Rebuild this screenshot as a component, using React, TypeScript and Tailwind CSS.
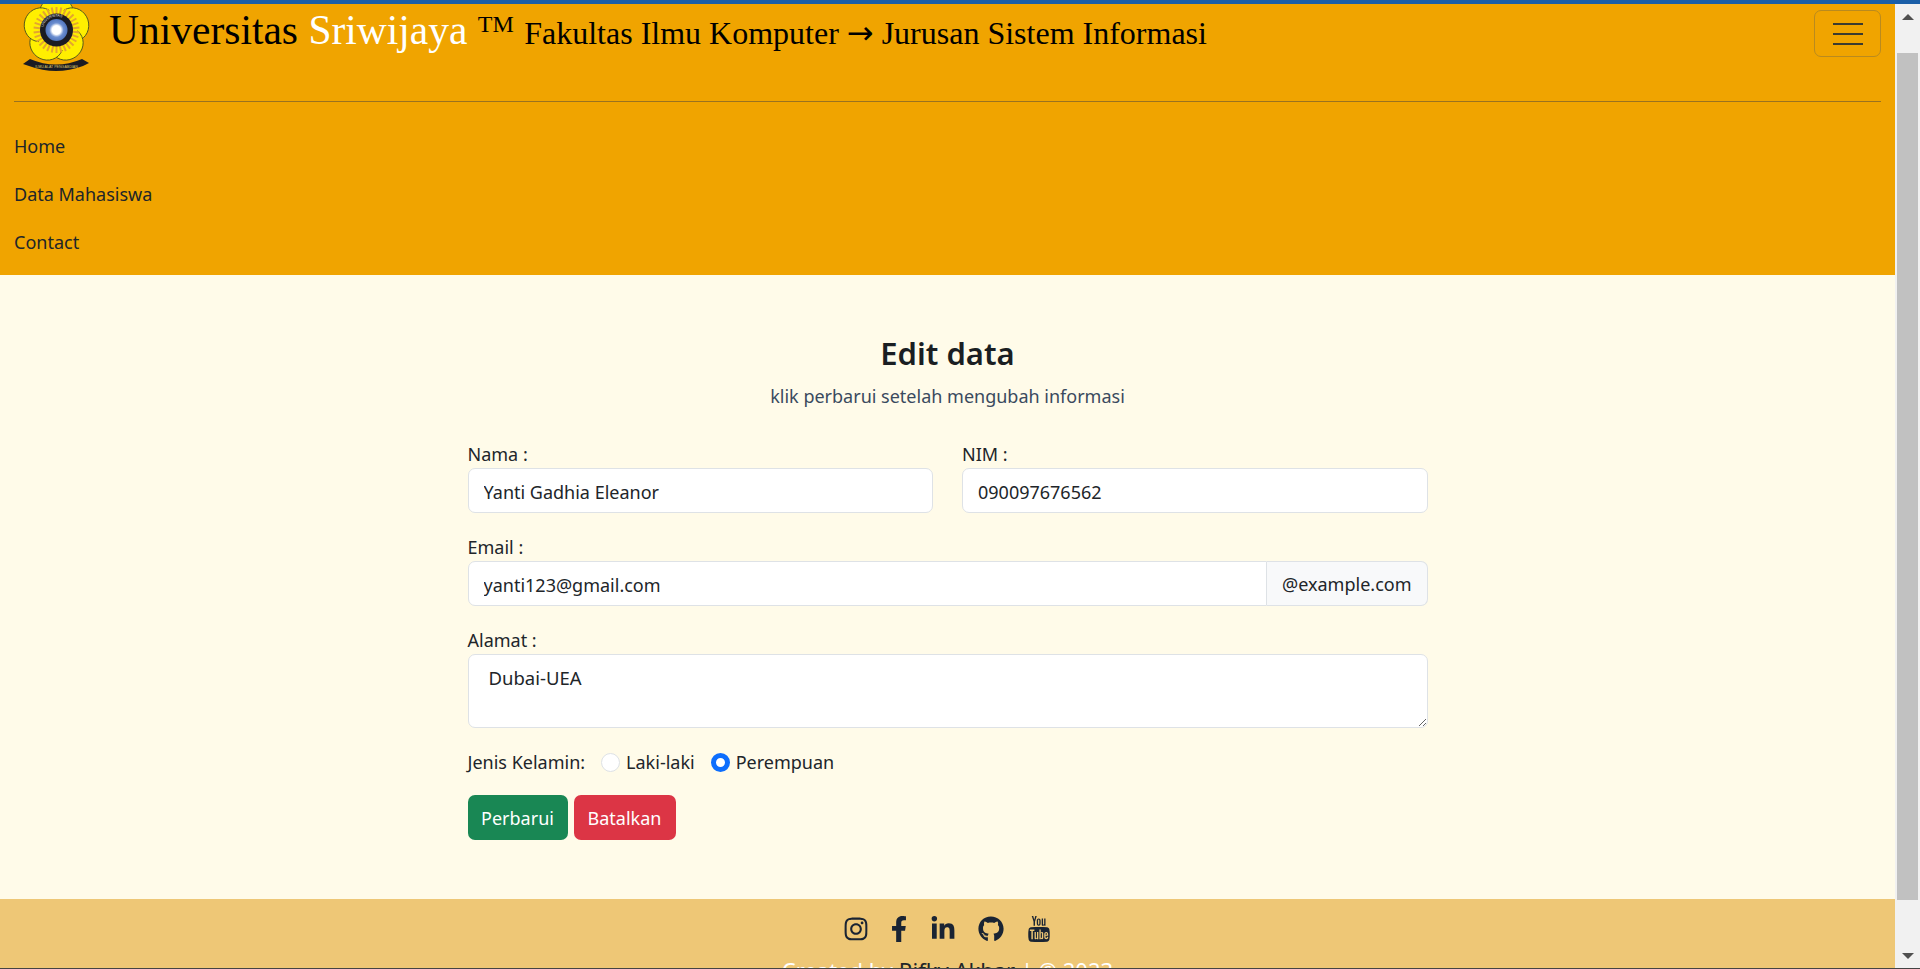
import React from 'react'
import { FaInstagram, FaFacebookF, FaLinkedinIn, FaGithub } from 'react-icons/fa'
import { TfiYoutube } from 'react-icons/tfi'

const petals = [0, 72, 144, 216, 288]
const rays = Array.from({ length: 30 }, (_, i) => i * 12)

const Logo = () => (
  <svg width="72" height="68" viewBox="0 0 72 68" className="block shrink-0">
    <defs>
      <radialGradient id="centre">
        <stop offset="40%" stopColor="#ffffff" />
        <stop offset="65%" stopColor="#6d8fd0" />
        <stop offset="100%" stopColor="#4f74bd" />
      </radialGradient>
      <path id="ring" d="M21 26 a13.5 13.5 0 0 1 27 0" />
    </defs>
    <g fill="#ffef00" stroke="#3f4a20" strokeWidth="0.8">
      {petals.map((a) => (
        <ellipse key={a} cx="34.5" cy="9" rx="17" ry="16" transform={`rotate(${a} 34.5 26)`} />
      ))}
    </g>
    <circle cx="34.5" cy="26" r="21" fill="#ffef00" />
    <g stroke="#e3a530" strokeWidth="2">
      {rays.map((a) => (
        <line key={a} x1="34.5" y1="3" x2="34.5" y2="11" transform={`rotate(${a} 34.5 26)`} />
      ))}
    </g>
    <circle cx="34.5" cy="26" r="16.5" fill="#1b1b22" />
    <circle cx="34.5" cy="26" r="11" fill="url(#centre)" />
    <text fontSize="3.6" fill="#e8e8e8" fontFamily="Liberation Sans, sans-serif">
      <textPath href="#ring" startOffset="3">UNIVERSITAS</textPath>
    </text>
    <path d="M1 60 L8 55 Q34 66 60 55 L67 59 L61 62 Q34 72 7 62 Z" fill="#1b1b22" />
    <text x="34.5" y="63.5" textAnchor="middle" fontSize="3.6" fill="#d9c36a" fontFamily="Liberation Sans, sans-serif">ILMU ALAT PENGABDIAN</text>
  </svg>
)

const inputCls =
  "w-full h-[45px] px-[15px] pt-[2px] bg-white border border-[#dee2e6] rounded-[7px] text-[#212529] text-[18px] outline-none"

const App: React.FC = () => {
  return (
    <div className="h-[969px] w-[1920px] overflow-hidden flex flex-col bg-[#fffbe9] text-[#212529] text-[18px] font-['Noto_Sans','Open_Sans',sans-serif]">
      <div className="h-[4px] bg-[#1b5fa8] shrink-0" />
      <div className="flex h-[964px] shrink-0">
        <div className="w-[1895px] shrink-0 flex flex-col">
          <header className="bg-[#f0a400] h-[271px] shrink-0 px-[14px]">
            <div className="flex h-[98px] border-b border-[#9a7220] relative">
              <div className="w-[95px] pl-[8px]"><Logo /></div>
              <div className="pt-[2px] text-[41.5px] leading-[48px] font-['Liberation_Serif',serif] text-black whitespace-nowrap">
                Universitas <span className="text-white">Sriwijaya</span> <sup className="text-[24px]">TM</sup>{' '}
                <span className="text-[32px]">Fakultas Ilmu Komputer <span className="font-['DejaVu_Sans',sans-serif]">→</span> Jurusan Sistem Informasi</span>
              </div>
              <button className="absolute right-0 top-[6px] w-[67px] h-[47px] border border-[#b98a1f] rounded-[7px] flex flex-col items-center justify-center gap-[8px]">
                <span className="block w-[30px] h-[2px] bg-[#3b3b30]" />
                <span className="block w-[30px] h-[2px] bg-[#3b3b30]" />
                <span className="block w-[30px] h-[2px] bg-[#3b3b30]" />
              </button>
            </div>
            <nav className="flex flex-col pt-[30px] gap-[19px] leading-[29px]">
              <a>Home</a>
              <a>Data Mahasiswa</a>
              <a>Contact</a>
            </nav>
          </header>
          <main className="h-[624px] shrink-0 flex flex-col items-center pt-[58px]">
            <h1 className="text-[31px] leading-[40px] font-semibold text-[#1a1e22]">Edit data</h1>
            <p className="mt-[9px] leading-[28px] text-[#3a4a5e]">klik perbarui setelah mengubah informasi</p>
            <form className="w-[960px] mt-[31px]">
              <div className="grid grid-cols-2 gap-x-[29px]">
                <label className="block">
                  <span className="block leading-[26px] mb-[1px]">Nama :</span>
                  <input className={inputCls} defaultValue="Yanti Gadhia Eleanor" />
                </label>
                <label className="block">
                  <span className="block leading-[26px] mb-[1px]">NIM :</span>
                  <input className={inputCls} defaultValue="090097676562" />
                </label>
              </div>
              <label className="block mt-[21px]">
                <span className="block leading-[26px] mb-[1px]">Email :</span>
                <div className="flex">
                  <input className={inputCls + " rounded-r-none"} defaultValue="yanti123@gmail.com" />
                  <span className="h-[45px] px-[15px] pt-[2px] flex items-center whitespace-nowrap bg-[#f8f9fa] border border-l-0 border-[#dee2e6] rounded-r-[7px]">@example.com</span>
                </div>
              </label>
              <label className="block mt-[21px]">
                <span className="block leading-[26px] mb-[1px]">Alamat :</span>
                <textarea className="block w-full h-[74px] px-[20px] py-[9px] text-[18.5px] bg-white border border-[#dee2e6] rounded-[7px] outline-none" defaultValue="Dubai-UEA" />
              </label>
              <div className="flex items-center mt-[20px] h-[28px]">
                <span>Jenis Kelamin:</span>
                <span className="ml-[16px] w-[19px] h-[19px] rounded-full bg-white border border-[#dee2e6]" />
                <span className="ml-[6px]">Laki-laki</span>
                <span className="ml-[16px] w-[19px] h-[19px] rounded-full bg-white border-[5px] border-[#0d6efd]" />
                <span className="ml-[6px]">Perempuan</span>
              </div>
              <div className="flex gap-[6px] mt-[19px]">
                <button type="button" className="h-[45px] w-[100px] pt-[1px] bg-[#198754] text-white rounded-[7px]">Perbarui</button>
                <button type="button" className="h-[45px] w-[102px] pt-[1px] bg-[#dc3545] text-white rounded-[7px]">Batalkan</button>
              </div>
            </form>
          </main>
          <footer className="flex-1 bg-[#eec776] flex flex-col items-center overflow-hidden">
            <div className="flex items-center pt-[17px] text-[#1a2433] text-[26px]">
              <FaInstagram />
              <FaFacebookF className="ml-[17px]" />
              <FaLinkedinIn className="ml-[18px]" />
              <FaGithub className="ml-[22px]" />
              <TfiYoutube className="ml-[22px]" />
            </div>
            <p className="mt-[13px] text-[22px] leading-[30px] text-white whitespace-nowrap">Created by <span className="text-[#212529]">Rifky Akbar</span> | © 2023</p>
          </footer>
        </div>
        <aside className="w-[25px] shrink-0 bg-[#f1f1f1] flex flex-col items-center">
          <div className="h-[49px] w-full flex justify-center pt-[10px]">
            <span className="w-0 h-0 border-x-[6px] border-x-transparent border-b-[6px] border-b-[#505050]" />
          </div>
          <div className="w-[21px] h-[847px] bg-[#c1c1c1]" />
          <div className="flex-1 w-full flex justify-center items-end pb-[9px]">
            <span className="w-0 h-0 border-x-[6px] border-x-transparent border-t-[6px] border-t-[#505050]" />
          </div>
        </aside>
      </div>
      <div className="h-[1px] bg-[#444444] shrink-0" />
    </div>
  )
}

export default App
